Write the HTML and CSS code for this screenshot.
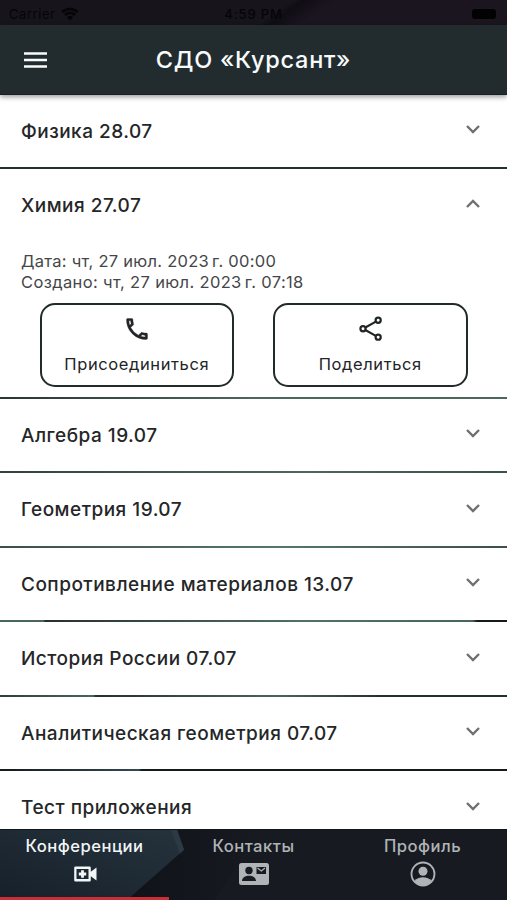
FILE: index.html
```html
<!DOCTYPE html>
<html lang="ru">
<head>
<meta charset="utf-8">
<title>СДО «Курсант»</title>
<link rel="stylesheet" href="styles.css">
</head>
<body>
<div class="app">
  <div class="status">
    <div class="carrier"><span>Carrier</span>
      <svg width="18" height="14" viewBox="0 0 18 14"><path d="M1.2 5.2a11 11 0 0 1 15.6 0M4 8a7 7 0 0 1 10 0" fill="none" stroke="currentColor" stroke-width="2.6"/><path d="M9 13.5 5.9 10.2a4.4 4.4 0 0 1 6.2 0z" fill="currentColor"/></svg>
    </div>
    <span class="time">4:59 PM</span>
    <span class="battery"></span>
  </div>
  <header class="bar">
    <svg class="menu" width="23" height="16" viewBox="0 0 23 16"><path d="M0 1.5h23M0 8h23M0 14.5h23" stroke="currentColor" stroke-width="2.6"/></svg>
    <h1>СДО «Курсант»</h1>
  </header>
  <main class="list">
    <section class="item"><div class="head"><h2>Физика 28.07</h2><svg class="chev" viewBox="0 0 14 9"><path d="m1 1 6 6 6-6"/></svg></div></section>
    <section class="item open">
      <div class="head"><h2>Химия 27.07</h2><svg class="chev" viewBox="0 0 14 9"><path d="m1 8 6-6 6 6"/></svg></div>
      <div class="info"><p class="date">Дата: чт, 27 июл. 2023&#8239;г. 00:00</p><p>Создано: чт, 27 июл. 2023&#8239;г. 07:18</p></div>
      <div class="actions">
        <button><svg width="28" height="28" viewBox="0 0 24 24"><path d="M6.54 5c.06.89.21 1.76.45 2.59l-1.2 1.2c-.41-1.2-.67-2.47-.76-3.79h1.51m9.86 12.02c.85.24 1.72.39 2.6.45v1.49c-1.32-.09-2.59-.35-3.8-.75l1.2-1.19M7.5 3H4c-.55 0-1 .45-1 1 0 9.39 7.61 17 17 17 .55 0 1-.45 1-1v-3.49c0-.55-.45-1-1-1-1.24 0-2.45-.2-3.57-.57a.84.84 0 0 0-.31-.05c-.26 0-.51.1-.71.29l-2.2 2.2a15.15 15.15 0 0 1-6.59-6.59l2.2-2.2c.28-.28.36-.67.25-1.02A11.36 11.36 0 0 1 8.5 4c0-.55-.45-1-1-1z" fill="currentColor" stroke="currentColor" stroke-width=".3"/></svg><span>Присоединиться</span></button>
        <button><svg width="28" height="28" viewBox="0 0 24 24" fill="none" stroke="currentColor" stroke-width="1.900"><circle cx="19" cy="4.500" r="2.200"/><circle cx="6" cy="11.800" r="2.200"/><circle cx="19" cy="19" r="2.200"/><path d="m8 10.700 9-5M8 12.900l9 5"/></svg><span>Поделиться</span></button>
      </div>
    </section>
    <section class="item line2"><div class="head"><h2>Алгебра 19.07</h2><svg class="chev" viewBox="0 0 14 9"><path d="m1 1 6 6 6-6"/></svg></div></section>
    <section class="item line3"><div class="head"><h2>Геометрия 19.07</h2><svg class="chev" viewBox="0 0 14 9"><path d="m1 1 6 6 6-6"/></svg></div></section>
    <section class="item line4"><div class="head"><h2>Сопротивление материалов 13.07</h2><svg class="chev" viewBox="0 0 14 9"><path d="m1 1 6 6 6-6"/></svg></div></section>
    <section class="item line5"><div class="head"><h2>История России 07.07</h2><svg class="chev" viewBox="0 0 14 9"><path d="m1 1 6 6 6-6"/></svg></div></section>
    <section class="item line6"><div class="head"><h2>Аналитическая геометрия 07.07</h2><svg class="chev" viewBox="0 0 14 9"><path d="m1 1 6 6 6-6"/></svg></div></section>
    <section class="item line7"><div class="head"><h2>Тест приложения</h2><svg class="chev" viewBox="0 0 14 9"><path d="m1 1 6 6 6-6"/></svg></div></section>
  </main>
  <nav class="tabs">
    <svg class="facets" viewBox="0 0 507 71" preserveAspectRatio="none">
      <defs>
        <linearGradient id="f" x1="0" y1="1" x2="1" y2="0"><stop offset="0" stop-color="#17202a"/><stop offset="1" stop-color="#25333d"/></linearGradient>
        <linearGradient id="s" x1="0" x2="1"><stop offset="0" stop-color="#0f1319"/><stop offset="1" stop-color="#171b21"/></linearGradient>
      </defs>
      <path d="M125 71 184 19 178 0H260L215 71z" fill="url(#s)"/>
      <path d="M0 0H177L184 20 127 71H0z" fill="url(#f)"/>
      <path d="M177 0 184 20 180 24 171 0z" fill="#2b3a44"/>
    </svg>
    <a class="tab active"><span>Конференции</span><svg width="28" height="28" viewBox="0 0 28 28"><path fill="currentColor" fill-rule="evenodd" d="M4.500 6.500h14a1.300 1.300 0 0 1 1.300 1.300v4L25.500 7.500v13l-5.700-4.300v4a1.300 1.300 0 0 1-1.300 1.300h-14a1.300 1.300 0 0 1-1.300-1.300V7.800a1.300 1.300 0 0 1 1.300-1.300zm1 2.500v10h12V9zm4.600 1.300h2.800v2.300h2.300v2.800h-2.300v2.300h-2.800v-2.300H7.800v-2.800h2.300z"/></svg></a>
    <a class="tab"><span>Контакты</span><svg width="30" height="28" viewBox="0 0 30 28"><rect y="3" width="30" height="22" rx="2.500" fill="currentColor"/><circle cx="10" cy="10.500" r="3.700" fill="#171c22"/><path d="M3 21c0-7 14-7 14 0z" fill="#171c22"/><path d="M17.500 7h9.500v7h-9.500z" fill="#171c22"/><path d="m18.500 8 3.800 3L26 8" fill="none" stroke="currentColor" stroke-width="1.300"/></svg></a>
    <a class="tab"><span>Профиль</span><svg width="28" height="28" viewBox="0 0 28 28"><circle cx="14" cy="14" r="11.500" fill="none" stroke="currentColor" stroke-width="1.800"/><circle cx="14" cy="11.300" r="4.500" fill="currentColor"/><path d="M5.500 21c3.500-5 13.500-5 17 0-4 6-13 6-17 0z" fill="currentColor"/></svg></a>
    <i class="indicator"></i>
  </nav>
</div>
</body>
</html>
```

FILE: styles.css
```css
* { box-sizing: border-box; }
body { margin: 0; font-family: Inter, "Liberation Sans", sans-serif; }
h1, h2, p { margin: 0; font-weight: 500; white-space: nowrap; }
.app { width: 507px; height: 900px; display: flex; flex-direction: column; overflow: hidden; background: #fff; }
.status { flex: none; height: 25px; padding: 3px 11px 0 9px; display: grid; grid-template-columns: 1fr auto 1fr; align-items: center; font-size: 13px; color: #050507; background: linear-gradient(145deg, #17141c 0 54%, #100d15 56%, #1b151f 62%); }
.carrier { display: flex; align-items: center; gap: 6px; letter-spacing: .55px; }
.time { font-weight: 500; letter-spacing: .85px; padding-left: 2px; }
.battery { justify-self: end; width: 24px; height: 10px; border-radius: 3px; background: #020203; }
.bar { flex: none; position: relative; z-index: 1; height: 70px; display: grid; grid-template-columns: 60px 1fr 60px; align-items: center; background: #222c2f; border-bottom: 1px solid #192022; box-shadow: 0 2px 5px #0006; color: #f8fbfc; }
.menu { margin-left: 24px; }
h1 { font-size: 23.500px; line-height: 30px; letter-spacing: .75px; font-weight: 450; text-align: center; }
.list { flex: 1; min-height: 0; overflow: hidden; }
.item { height: 74.600px; border-top: 2px solid #26302f; }
.item:first-child { height: 72px; border-top: 0; }
.item.open { height: 229.500px; }
.line2 { border-image: linear-gradient(90deg, #2b3534, #4d675d 50%, #4d675d) 1; }
.line3 { border-image: linear-gradient(90deg, #33413d, #4d675d 60%, #3a5148) 1; }
.line4 { border-image: linear-gradient(90deg, #3c5048, #587569 55%, #3c5048) 1; }
.line5 { border-image: linear-gradient(90deg, #49665b 0 8.800%, #26302f 9%, #527065 60%, #49665b 93%, #151a1b 94%) 1; }
.line6 { border-image: linear-gradient(90deg, #2b403e 0, #49665b 18.500%, #26302f 19%, #49665b 55%, #26302f 75%) 1; }
.line7 { border-image: linear-gradient(90deg, #151a1b, #354752 27.500%, #151a1b 28%) 1; }
.head { height: 72.500px; padding: 1.500px 27px 0 21px; display: flex; align-items: center; justify-content: space-between; }
h2 { font-size: 19px; line-height: 24px; letter-spacing: .48px; font-weight: 450; color: #252628; }
.chev { width: 14px; height: 9px; margin-top: -4px; fill: none; stroke: #6f7071; stroke-width: 2.400; }
.item:first-child .chev, .open .chev { margin-top: -6px; }
.info { padding: 9.500px 21px 0; font-size: 16.500px; line-height: 21px; letter-spacing: .36px; color: #444648; }
.info p { font-weight: 400; }
.info .date { letter-spacing: .27px; }
.actions { display: flex; gap: 39px; padding: 9.500px 39.500px 0; }
button { flex: 1; height: 84px; padding: 10px 0 0; display: flex; flex-direction: column; align-items: center; gap: 11px; border: 2.500px solid #222b2b; border-radius: 15px; background: #fff; font: 400 16.500px/20px Inter, sans-serif; letter-spacing: .6px; color: #222426; }
.tabs { flex: none; height: 71px; position: relative; display: grid; grid-template-columns: repeat(3, 1fr); background: #171b21; border-top: 1px solid #11171a; }
.facets { position: absolute; inset: 0; width: 100%; height: 100%; }
.tab { position: relative; padding-top: 6px; display: flex; flex-direction: column; align-items: center; gap: 3px; font-size: 16.600px; line-height: 21px; font-weight: 450; letter-spacing: .5px; color: #b0b4b6; }
.tab.active { color: #f1f6f7; }
.indicator { position: absolute; left: 0; bottom: 0; width: 169px; height: 3px; background: #c92f35; }
```
